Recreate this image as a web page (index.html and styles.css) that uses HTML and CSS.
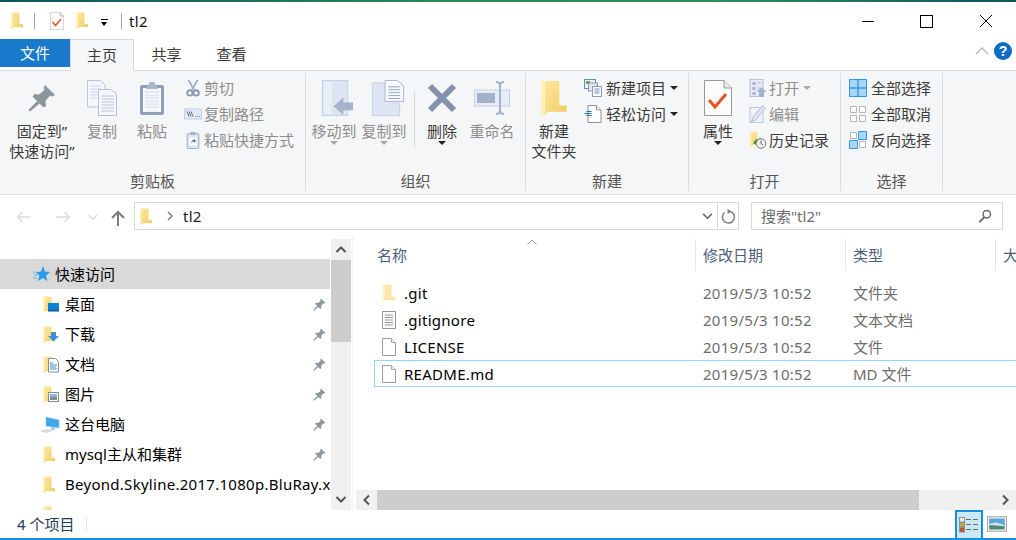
FILE: index.html
```html
<!DOCTYPE html>
<html lang="zh-CN">
<head>
<meta charset="utf-8">
<title>tl2</title>
<link rel="stylesheet" href="styles.css">
</head>
<body>
<svg class="defs" aria-hidden="true">
  <defs>
    <linearGradient id="fg" x1="0" y1="0" x2="1" y2="1"><stop offset="0" stop-color="#fdeaa4"/><stop offset="1" stop-color="#f4ca62"/></linearGradient>
    <symbol id="folder" viewBox="0 0 12 17"><path d="M0 0.500H8.500V12H12V15H3.200L1 17L0 16Z" fill="url(#fg)"/><path d="M0 0.500H1.800V15.500L1 17L0 16Z" fill="#fff0bd"/></symbol>
    <symbol id="folderpale" viewBox="0 0 12 17"><path d="M0 0.500H8.500V12H12V15H3.200L1 17L0 16Z" fill="#fbe7ae"/><path d="M0 0.500H1.800V15.500L1 17L0 16Z" fill="#fdf3d2"/></symbol>
    <symbol id="pin" viewBox="0 0 28 28"><path d="M17 1L27 11L24 12.500L22 11.500L17.500 17L18 22L15.500 23.500L4.500 12.500L6.500 10L11 10.500L16.500 6L15.500 4Z" fill="#8d969d"/><path d="M9 17L11.500 19.500L2 27.500L0.500 26Z" fill="#8d969d"/></symbol>
    <symbol id="doccheck" viewBox="0 0 28 36"><path d="M.5.500H20L27.500 8V35.500H.5Z" fill="#fbfbfb" stroke="#9a9a9a"/><path d="M20 .5V8H27.500" fill="#e8e8e8" stroke="#9a9a9a"/><path d="M5 20L11 27L22 14" fill="none" stroke="#e8531f" stroke-width="3"/></symbol>
    <symbol id="paper" viewBox="0 0 14 18"><path d="M.5.500H9.500L13.500 4.500V17.500H.5Z" fill="#fff" stroke="#9b9b9b"/><path d="M9.500.5V4.500H13.500" fill="#eee" stroke="#aaa"/></symbol>
    <symbol id="textdoc" viewBox="0 0 14 18"><path d="M.5.500H13.500V17.500H.5Z" fill="#fff" stroke="#949494"/><path d="M3 4H11M3 6.500H11M3 9H11M3 11.500H11M3 14H11" stroke="#8d8d8d"/></symbol>
    <symbol id="copybig" viewBox="0 0 30 36"><path d="M.5.500H13L18 5V27H.5Z" fill="#f4f7fc" stroke="#b8c5de"/><path d="M3.500 6H14M3.500 9H14M3.500 12H14M3.500 15H14M3.500 18H10" stroke="#ccd5e8"/><path d="M11.500 9.500H24L29.500 14V35.500H11.500Z" fill="#f4f7fc" stroke="#b0bed9"/><path d="M14.500 16H27M14.500 19H27M14.500 22H27M14.500 25H27M14.500 28H27M14.500 31H27" stroke="#b8c4dc"/></symbol>
    <symbol id="paste" viewBox="0 0 26 36"><rect x="1" y="5" width="24" height="30" rx="2" fill="#8e9ebc"/><rect x="4" y="8" width="18" height="24" fill="#f5f7fb"/><path d="M6 12H20M6 15H20M6 18H20M6 21H20M6 24H20M6 27H20" stroke="#d3dae8"/><path d="M9 5L11 2H15L17 5L19 9H7Z" fill="#aab6cc"/></symbol>
    <symbol id="scissors" viewBox="0 0 16 20"><path d="M3 1L9 12M13 1L7 12" stroke="#a6b0c6" stroke-width="2.200" fill="none"/><circle cx="4.500" cy="15.500" r="3" fill="none" stroke="#8c99b4" stroke-width="2"/><circle cx="11.500" cy="15.500" r="3" fill="none" stroke="#8c99b4" stroke-width="2"/></symbol>
    <symbol id="path" viewBox="0 0 18 11"><rect x=".5" y=".5" width="17" height="10" fill="#e3e9f5" stroke="#c4cfe3"/><path d="M3 3L5 8M5 3L7 8M7 3L9 8" stroke="#5e6f90"/><path d="M11 8H12M13 8H14M15 8H16" stroke="#7a89a6"/></symbol>
    <symbol id="shortcut" viewBox="0 0 14 20"><rect x=".5" y="3" width="13" height="16.500" rx="1" fill="#dfe5f0" stroke="#94a3bf"/><rect x="4" y="1" width="6" height="3.500" fill="#a9b5cb"/><rect x="3" y="7" width="8" height="9" fill="#fff"/><path d="M5 14C5 11 6 10 8 10V8.500L10.500 11L8 13V11.500C7 11.500 6 12.500 5 14Z" fill="#4a6a9c"/></symbol>
    <symbol id="move" viewBox="0 0 33 37"><rect x=".5" y=".5" width="26" height="36" fill="#dde5f3" stroke="#c5d1e6"/><path d="M2 2L10 2V35H2Z" fill="#e9eef7"/><path d="M12 27L22 18V23H32V31H22V36Z" fill="#a5b3cb"/></symbol>
    <symbol id="copyto" viewBox="0 0 33 37"><rect x=".5" y="3" width="28" height="33.500" fill="#dde5f3" stroke="#c5d1e6"/><path d="M13.500.5H26L32.500 6V22H13.500Z" fill="#f7f9fd" stroke="#a9b7d0"/><path d="M17 7H29M17 10H29M17 13H29M17 16H29M17 19H29" stroke="#93a3c0"/></symbol>
    <symbol id="del" viewBox="0 0 32 32"><path d="M4 4L28 28M28 4L4 28" stroke="#8592ad" stroke-width="6"/></symbol>
    <symbol id="rename" viewBox="0 0 36 36"><rect x=".5" y="10" width="35" height="16" fill="#e7edf7" stroke="#c5d1e6"/><rect x="3" y="13" width="18" height="10" fill="#a4b1ca"/><path d="M22 2C25 2 26 3 26 6V30C26 33 25 34 22 34M30 2C27 2 26 3 26 6M30 34C27 34 26 33 26 30" fill="none" stroke="#a5b3cb" stroke-width="2"/></symbol>
    <symbol id="newitem" viewBox="0 0 18 18"><rect x=".5" y=".5" width="11" height="9" fill="#e9f2fb" stroke="#5f8fb0"/><rect x="2" y="2" width="4" height="3" fill="#6ea54f"/><rect x="4.500" y="4" width="9" height="8" fill="#e4e8ee" stroke="#8a96a8"/><path d="M8.500 7.500H17.500V17.500H8.500Z" fill="#fff" stroke="#8a9ab4"/><path d="M10.500 10H15.500M10.500 12H15.500M10.500 14H15.500" stroke="#6d96c8"/></symbol>
    <symbol id="easy" viewBox="0 0 17 18"><path d="M3.500.5H12L16.500 5V17.500H3.500Z" fill="#fff" stroke="#8f8f8f"/><path d="M12 .5V5H16.500" fill="#eee" stroke="#999"/><path d="M2 6.500H7M0 8.500H7M2 10.500H7" stroke="#1c6db8"/></symbol>
    <symbol id="open" viewBox="0 0 17 18"><rect x=".5" y=".5" width="13" height="17" fill="#e5eaf4" stroke="#b7c3da"/><path d="M3 3H6V6H3ZM3 8H6V11H3ZM3 13H6V16H3Z" fill="#a3b0c9"/><path d="M8 4H11M8 9H10" stroke="#a3b0c9"/><path d="M12 8L17 13H14.500V18H9.500V13H7Z" fill="#a3b4d0"/></symbol>
    <symbol id="edit" viewBox="0 0 17 18"><rect x=".5" y="2.500" width="13" height="15" fill="#eef1f8" stroke="#bac6dc"/><path d="M13 .5L16 3L6 15L2 16.500L3 13Z" fill="#dfe5f1" stroke="#b1bdd4"/></symbol>
    <symbol id="history" viewBox="0 0 17 18"><use href="#folder" width="11" height="16"/><path d="M4 13A5 5 0 0 1 10 8V6L13 9.500L10 12.500V10.500A3 3 0 0 0 7 13Z" fill="#3e9a2e"/><circle cx="11.500" cy="12.500" r="4.800" fill="#eee" stroke="#7b7b7b"/><path d="M11.500 9.500V12.500L13.500 14" stroke="#666" fill="none"/></symbol>
    <symbol id="selall" viewBox="0 0 18 18"><path d="M.5.5H17.500V17.500H.5Z" fill="#a9d6f8" stroke="#2e9be6"/><path d="M9 0V18M0 9H18" stroke="#2e9be6" stroke-width="1.500"/></symbol>
    <symbol id="selnone" viewBox="0 0 18 18"><path d="M1.500 1.500H7.500V7.500H1.500ZM10.500 1.500H16.500V7.500H10.500ZM1.500 10.500H7.500V16.500H1.500ZM10.500 10.500H16.500V16.500H10.500Z" fill="#fff" stroke="#b5b5b5"/></symbol>
    <symbol id="selinv" viewBox="0 0 18 18"><path d="M1.500 1.500H7.500V7.500H1.500ZM10.500 10.500H16.500V16.500H10.500Z" fill="#fff" stroke="#b5b5b5"/><path d="M9.500.5H17.500V8.500H9.500ZM.5 9.500H8.500V17.500H.5Z" fill="#a9d6f8" stroke="#2e9be6"/></symbol>
    <symbol id="star" viewBox="0 0 17 16"><path d="M10 0L12 5.500L17 6L13 9.500L14.500 15L10 12L5 15L6.500 9.500L3 6.500L8 5.500Z" fill="#2b9be8"/><path d="M0 6H4M1 9H6M0 12H5" stroke="#62b6ee"/></symbol>
    <symbol id="desk" viewBox="0 0 17 17"><use href="#folder" width="12" height="17"/><rect x="5" y="7" width="11" height="8" fill="#0f7fd6"/><rect x="5" y="14" width="11" height="1.500" fill="#075c9e"/></symbol>
    <symbol id="down" viewBox="0 0 17 17"><use href="#folder" width="12" height="17"/><path d="M8 6H13V10H16L10.500 15.500L5 10H8Z" fill="#3f8fd8"/></symbol>
    <symbol id="docs" viewBox="0 0 17 17"><use href="#folder" width="12" height="17"/><path d="M5.500 2.500H12.500L15.500 5.500V16H5.500Z" fill="#fff" stroke="#8c8c8c"/><path d="M7 7H10M7 9H14M7 11H13M7 13H14" stroke="#2e8fd0"/></symbol>
    <symbol id="pics" viewBox="0 0 17 17"><use href="#folder" width="12" height="17"/><rect x="5.500" y="6.500" width="10" height="9" fill="#fff" stroke="#8a8a8a"/><rect x="7" y="8" width="7" height="3" fill="#88b4d8"/><rect x="7" y="11" width="7" height="3" fill="#7d8f9e"/></symbol>
    <symbol id="pc" viewBox="0 0 20 17"><path d="M6 1L19 4V12L6 10Z" fill="#3fa7ea" stroke="#8cc6ee" stroke-width=".6"/><path d="M11 11L15 12V14H11Z" fill="#b9c1c8"/><path d="M0 15L8 13L13 15L6 17Z" fill="#d5d9dd"/></symbol>
    <symbol id="viewdetail" viewBox="0 0 20 16"><rect x=".5" y=".5" width="5" height="4.500" fill="#eee" stroke="#8d8d8d"/><rect x=".5" y="5.500" width="5" height="4.500" fill="#c9a83c" stroke="#8d8d8d"/><rect x=".5" y="10.500" width="5" height="4.500" fill="#c4552d" stroke="#8d8d8d"/><path d="M7 2.500H12M14 2.500H19M7 7.500H12M14 7.500H19M7 12.500H12M14 12.500H19" stroke="#6a6a6a"/></symbol>
    <symbol id="viewthumb" viewBox="0 0 18 14"><rect x=".5" y=".5" width="17" height="13" fill="#fff" stroke="#a4a4a4" stroke-width="1"/><rect x="2" y="2" width="14" height="5" fill="#5aa6df"/><rect x="2" y="7" width="14" height="5" fill="#4c8a7c"/><path d="M2 7L8 5.500L16 8V9L2 8Z" fill="#cfe3ec"/></symbol>
    <symbol id="chev-d" viewBox="0 0 12 8"><path d="M1 1L6 6L11 1" fill="none" stroke="currentColor" stroke-width="1.800"/></symbol>
  </defs>
</svg>

<div class="window">
  <div class="accent"></div>

  <header class="titlebar">
    <svg class="qa qa-folder"><use href="#folder"/></svg>
    <span class="vsep vsep-a"></span>
    <svg class="qa qa-doc"><use href="#doccheck"/></svg>
    <svg class="qa qa-folder qa-folder2"><use href="#folder"/></svg>
    <span class="qa-drop"></span>
    <span class="vsep vsep-b"></span>
    <span class="wintitle">tl2</span>
    <div class="winbtns">
      <svg class="wb" viewBox="0 0 14 14"><path d="M1 7.500H13" stroke="#000"/></svg>
      <svg class="wb" viewBox="0 0 14 14"><rect x=".5" y="1.500" width="12" height="12" fill="none" stroke="#000"/></svg>
      <svg class="wb" viewBox="0 0 14 14"><path d="M1 1L13 13M13 1L1 13" stroke="#000"/></svg>
    </div>
  </header>

  <nav class="tabs">
    <span class="tab tab-file">文件</span>
    <span class="tab tab-on">主页</span>
    <span class="tab">共享</span>
    <span class="tab">查看</span>
    <div class="tabs-end">
      <svg class="collapse" viewBox="0 0 14 8"><path d="M1 7L7 1L13 7" fill="none" stroke="#b5b5b5" stroke-width="1.300"/></svg>
      <span class="help">?</span>
    </div>
  </nav>

  <section class="ribbon">
    <div class="group g-clip">
      <div class="tools">
        <div class="big w70"><svg class="ic-big ic-pin"><use href="#pin"/></svg><span>固定到”<br>快速访问”</span></div>
        <div class="big w50 off"><svg class="ic-big"><use href="#copybig"/></svg><span>复制</span></div>
        <div class="big w50 off"><svg class="ic-big"><use href="#paste"/></svg><span>粘贴</span></div>
        <div class="smalls off s-clip">
          <div class="small"><svg class="ic-s"><use href="#scissors"/></svg>剪切</div>
          <div class="small"><svg class="ic-s"><use href="#path"/></svg>复制路径</div>
          <div class="small"><svg class="ic-s"><use href="#shortcut"/></svg>粘贴快捷方式</div>
        </div>
      </div>
      <div class="glabel">剪贴板</div>
    </div>

    <div class="group g-org">
      <div class="tools">
        <div class="big w50 off"><svg class="ic-big ic-shift"><use href="#move"/></svg><span>移动到</span><i class="caret caret-off"></i></div>
        <div class="big w50 off"><svg class="ic-big ic-shift"><use href="#copyto"/></svg><span>复制到</span><i class="caret caret-off"></i></div>
        <span class="tooldiv"></span>
        <div class="big w50"><svg class="ic-big ic-del"><use href="#del"/></svg><span>删除</span><i class="caret"></i></div>
        <div class="big w50 off"><svg class="ic-big"><use href="#rename"/></svg><span>重命名</span></div>
      </div>
      <div class="glabel">组织</div>
    </div>

    <div class="group g-new">
      <div class="tools">
        <div class="big w44"><svg class="ic-big"><use href="#folder"/></svg><span>新建<br>文件夹</span></div>
        <div class="smalls s-new">
          <div class="small"><svg class="ic-s"><use href="#newitem"/></svg>新建项目<i class="caret caret-in"></i></div>
          <div class="small"><svg class="ic-s"><use href="#easy"/></svg>轻松访问<i class="caret caret-in"></i></div>
        </div>
      </div>
      <div class="glabel">新建</div>
    </div>

    <div class="group g-open">
      <div class="tools">
        <div class="big w44"><svg class="ic-big"><use href="#doccheck"/></svg><span>属性</span><i class="caret"></i></div>
        <div class="smalls s-open">
          <div class="small off"><svg class="ic-s"><use href="#open"/></svg>打开<i class="caret caret-in caret-off"></i></div>
          <div class="small off"><svg class="ic-s"><use href="#edit"/></svg>编辑</div>
          <div class="small"><svg class="ic-s"><use href="#history"/></svg>历史记录</div>
        </div>
      </div>
      <div class="glabel">打开</div>
    </div>

    <div class="group g-sel">
      <div class="tools">
        <div class="smalls s-sel">
          <div class="small"><svg class="ic-s"><use href="#selall"/></svg>全部选择</div>
          <div class="small"><svg class="ic-s"><use href="#selnone"/></svg>全部取消</div>
          <div class="small"><svg class="ic-s"><use href="#selinv"/></svg>反向选择</div>
        </div>
      </div>
      <div class="glabel">选择</div>
    </div>
  </section>

  <section class="addressrow">
    <svg class="navbtn nb-back" viewBox="0 0 16 12"><path d="M15 6H1.500M6.500 1L1.500 6L6.500 11" fill="none" stroke="#dcdcdc" stroke-width="1.500"/></svg>
    <svg class="navbtn nb-fwd" viewBox="0 0 16 12"><path d="M1 6H14.500M9.500 1L14.500 6L9.500 11" fill="none" stroke="#dcdcdc" stroke-width="1.500"/></svg>
    <svg class="nb-drop"><use href="#chev-d"/></svg>
    <svg class="nb-up" viewBox="0 0 14 16"><path d="M7 16V2M1 8L7 2L13 8" fill="none" stroke="#7c7c7c" stroke-width="2"/></svg>
    <div class="addr">
      <svg class="addr-folder"><use href="#folder"/></svg>
      <svg class="addr-sep" viewBox="0 0 6 10"><path d="M1 1L5 5L1 9" fill="none" stroke="#7d7d7d" stroke-width="1.500"/></svg>
      <span class="addr-text latin">tl2</span>
      <svg class="addr-drop"><use href="#chev-d"/></svg>
      <span class="addr-refresh"><svg viewBox="0 0 14 15"><path d="M9 2.300A6 6 0 1 1 3.500 3.500" fill="none" stroke="#7d7d7d" stroke-width="1.500"/><path d="M6.500 0L10.500 2.500L6.500 5Z" fill="#7d7d7d"/></svg></span>
    </div>
    <div class="search">
      <span>搜索"tl2"</span>
      <svg viewBox="0 0 16 16"><circle cx="10" cy="6" r="4.300" fill="none" stroke="#666" stroke-width="1.600"/><path d="M7 9.500L1.500 15" stroke="#666" stroke-width="2.200"/></svg>
    </div>
  </section>

  <main class="main">
    <aside class="navpane">
      <div class="navlist">
        <div class="navrow root"><svg class="nic"><use href="#star"/></svg><span>快速访问</span></div>
        <div class="navrow"><svg class="nic"><use href="#desk"/></svg><span>桌面</span><svg class="npin"><use href="#pin"/></svg></div>
        <div class="navrow"><svg class="nic"><use href="#down"/></svg><span>下载</span><svg class="npin"><use href="#pin"/></svg></div>
        <div class="navrow"><svg class="nic"><use href="#docs"/></svg><span>文档</span><svg class="npin"><use href="#pin"/></svg></div>
        <div class="navrow"><svg class="nic"><use href="#pics"/></svg><span>图片</span><svg class="npin"><use href="#pin"/></svg></div>
        <div class="navrow"><svg class="nic nic-pc"><use href="#pc"/></svg><span>这台电脑</span><svg class="npin"><use href="#pin"/></svg></div>
        <div class="navrow"><svg class="nic nic-f"><use href="#folder"/></svg><span>mysql主从和集群</span><svg class="npin"><use href="#pin"/></svg></div>
        <div class="navrow"><svg class="nic nic-f"><use href="#folder"/></svg><span class="clip latin">Beyond.Skyline.2017.1080p.BluRay.x</span></div>
        <div class="navrow"><svg class="nic nic-f"><use href="#folder"/></svg></div>
      </div>
      <div class="vscroll">
        <svg class="sb-btn" viewBox="0 0 20 21"><path d="M5.500 13L10 8.500L14.500 13" fill="none" stroke="#555" stroke-width="2"/></svg>
        <div class="vthumb"></div>
        <svg class="sb-btn sb-end" viewBox="0 0 20 21"><path d="M5.500 8L10 12.500L14.500 8" fill="none" stroke="#555" stroke-width="2"/></svg>
      </div>
    </aside>

    <div class="content">
      <div class="colhead">
        <div class="hcell h-name">名称<svg class="sort" viewBox="0 0 10 6"><path d="M.5 5.500L5 1L9.500 5.500" fill="none" stroke="#9a9a9a"/></svg></div>
        <div class="hcell">修改日期</div>
        <div class="hcell">类型</div>
        <div class="hcell">大小</div>
      </div>
      <div class="files">
        <div class="frow"><span class="fname latin"><svg class="fic"><use href="#folderpale"/></svg>.git</span><span class="fmeta latin">2019/5/3 10:52</span><span class="fmeta">文件夹</span></div>
        <div class="frow"><span class="fname latin"><svg class="fic"><use href="#textdoc"/></svg>.gitignore</span><span class="fmeta latin">2019/5/3 10:52</span><span class="fmeta">文本文档</span></div>
        <div class="frow"><span class="fname latin"><svg class="fic"><use href="#paper"/></svg>LICENSE</span><span class="fmeta latin">2019/5/3 10:52</span><span class="fmeta">文件</span></div>
        <div class="frow sel"><span class="fname latin"><svg class="fic"><use href="#paper"/></svg>README.md</span><span class="fmeta latin">2019/5/3 10:52</span><span class="fmeta">MD 文件</span></div>
      </div>
      <div class="hscroll">
        <svg class="hs-btn" viewBox="0 0 21 20"><path d="M13 5.500L8.500 10L13 14.500" fill="none" stroke="#555" stroke-width="2"/></svg>
        <div class="hthumb"></div>
        <svg class="hs-btn hs-end" viewBox="0 0 21 20"><path d="M8 5.500L12.500 10L8 14.500" fill="none" stroke="#555" stroke-width="2"/></svg>
      </div>
    </div>
  </main>

  <footer class="status">
    <span class="count">4 个项目</span>
    <span class="status-sep"></span>
    <div class="views">
      <span class="viewbtn on"><svg><use href="#viewdetail"/></svg></span>
      <span class="viewbtn"><svg><use href="#viewthumb"/></svg></span>
    </div>
  </footer>
</div>
</body>
</html>
```
FILE: styles.css
```css
* { box-sizing: border-box; }
html, body { margin: 0; padding: 0; width: 1016px; height: 540px; overflow: hidden; background: #fff; }
body { font: 15px/20px "Noto Sans", "Noto Sans CJK SC", sans-serif; color: #000; }
.defs { width: 0; height: 0; display: block; }
.window { width: 1016px; height: 540px; display: flex; flex-direction: column; overflow: hidden; }
.accent { height: 2px; flex: none; background: linear-gradient(90deg, #10515f 0, #2b8a55 45%, #2f8f5b 70%, #10515f 100%); }
.latin { letter-spacing: .28px; }

/* title bar */
.titlebar { height: 37px; flex: none; display: flex; align-items: center; padding-left: 11px; }
.qa { display: block; }
.qa-folder { width: 12px; height: 17px; }
.vsep { width: 1px; height: 16px; background: #a0a0a0; }
.vsep-a { margin-left: 11px; }
.qa-doc { width: 14px; height: 18px; margin-left: 15px; }
.qa-folder2 { margin-left: 12px; }
.qa-drop { width: 7px; height: 6px; margin-left: 13px; margin-top: 3px; border-top: 1px solid #000; position: relative; }
.qa-drop::after { content: ""; position: absolute; left: 0; top: 2px; border: 3.500px solid transparent; border-top: 4px solid #000; border-bottom: 0; }
.vsep-b { margin-left: 13px; }
.wintitle { margin-left: 7px; font-size: 15px; color: #111; letter-spacing: .4px; }
.winbtns { margin-left: auto; display: flex; gap: 45px; padding-right: 23px; }
.wb { width: 14px; height: 14px; display: block; }

/* tabs */
.tabs { height: 32px; flex: none; display: flex; position: relative; border-bottom: 1px solid #dadbdc; }
.tab { width: 65px; height: 31px; display: flex; align-items: center; justify-content: center; padding-bottom: 2px; color: #3b3b3b; }
.tab-file { width: 70px; height: 28px; padding-bottom: 0; background: #1979ca; color: #fff; }
.tab-on { width: 64px; height: 32px; background: #f5f6f7; border: 1px solid #dadbdc; border-bottom: 0; padding-bottom: 2px; position: relative; z-index: 1; }
.tabs-end { margin-left: auto; display: flex; align-items: center; gap: 5px; padding: 0 4px 7px 0; }
.collapse { width: 14px; height: 8px; }
.help { width: 18px; height: 18px; border-radius: 50%; background: #0c6dc6; color: #fff; font: bold 14px/18px "Liberation Sans", sans-serif; text-align: center; }

/* ribbon */
.ribbon { height: 124px; flex: none; display: flex; background: #f5f6f7; border-bottom: 1px solid #dadbdc; padding: 2px 0 3px; color: #3c3c3c; }
.group { display: flex; flex-direction: column; border-right: 1px solid #dcdddf; flex: none; }
.g-clip { width: 306px; }
.g-clip .tools { padding-left: 7px; }
.g-org { width: 220px; }
.g-org .tools { padding-left: 3px; }
.g-new { width: 163px; }
.g-new .tools { padding-left: 6px; }
.g-open { width: 152px; }
.g-open .tools { padding-left: 7px; }
.g-sel { width: 102px; }
.g-sel .tools { padding-left: 8px; }
.tools { flex: 1; display: flex; min-height: 0; }
.glabel { height: 23px; padding-top: 3px; line-height: 20px; text-align: center; color: #555; flex: none; }
.big { display: flex; flex-direction: column; align-items: center; text-align: center; padding-top: 7px; flex: none; position: relative; }
.big span { display: block; margin-top: 5px; white-space: nowrap; }
.w70 { width: 70px; }
.w50 { width: 50px; }
.w44 { width: 44px; }
.ic-big { width: 36px; height: 36px; display: block; flex: none; }
.ic-pin { width: 28px; height: 28px; margin: 4px 0; }
.ic-del { width: 32px; height: 32px; margin: 2px 0; }
.ic-shift { margin-left: 8px; }
.off { color: #8d8d8d; }
.caret { display: block; width: 0; height: 0; border: 4px solid transparent; border-top: 4px solid #222; border-bottom: 0; margin-top: 0; }
.caret-off { border-top-color: #a9a9a9; }
.caret-in { margin: 0 0 0 4px; }
.tooldiv { width: 1px; height: 55px; background: #d5d6d8; margin: 19px 2px 0 5px; flex: none; }
.smalls { display: flex; flex-direction: column; padding-top: 2px; flex: none; }
.small { height: 26px; display: flex; align-items: center; white-space: nowrap; }
.ic-s { width: 18px; height: 18px; margin-right: 4px; flex: none; }
.s-clip { margin-left: 7px; }
.s-clip .ic-s, .s-open .ic-s { margin-right: 2px; }
.s-new { margin-left: 8px; }
.s-open { margin-left: 9px; }
.s-sel { margin-left: 0; }

/* address */
.addressrow { height: 41px; flex: none; display: flex; align-items: flex-start; padding-top: 7px; }
.navbtn { width: 16px; height: 12px; margin-top: 9px; flex: none; }
.nb-back { margin-left: 16px; }
.nb-fwd { margin-left: 23px; }
.nb-drop { width: 10px; height: 7px; margin: 12px 0 0 17px; color: #dcdcdc; flex: none; }
.nb-up { width: 14px; height: 16px; margin: 8px 0 0 13px; flex: none; }
.addr { width: 605px; height: 28px; margin-left: 9px; border: 1px solid #d9d9d9; display: flex; align-items: center; flex: none; padding-left: 5px; }
.addr-folder { width: 12px; height: 17px; flex: none; }
.addr-sep { width: 6px; height: 10px; margin-left: 15px; flex: none; }
.addr-text { margin-left: 10px; color: #222; }
.addr-drop { width: 11px; height: 7px; margin-left: auto; color: #666; flex: none; }
.addr-refresh { width: 21px; height: 26px; margin-left: 4px; border-left: 1px solid #d9d9d9; display: flex; align-items: center; justify-content: center; flex: none; }
.addr-refresh svg { width: 14px; height: 15px; }
.search { width: 252px; height: 28px; margin-left: 12px; border: 1px solid #d9d9d9; display: flex; align-items: center; justify-content: space-between; padding: 0 10px 0 9px; color: #6d6d6d; flex: none; }
.search svg { width: 14px; height: 14px; }

/* main */
.main { height: 274px; flex: none; display: flex; }
.navpane { width: 353px; flex: none; display: flex; border-right: 1px solid #f2f2f2; overflow: hidden; padding-top: 3px; }
.navlist { width: 331px; flex: none; padding-top: 20px; overflow: hidden; height: 271px; }
.navrow { width: 330px; height: 30px; display: flex; align-items: center; padding-left: 43px; color: #000; white-space: nowrap; }
.navrow.root { padding-left: 33px; background: #d9d9d9; }
.navrow.root .nic { width: 17px; height: 16px; margin-right: 5px; }
.nic { width: 17px; height: 17px; margin-right: 5px; flex: none; }
.nic-f { width: 12px; margin-right: 10px; }
.nic-pc { width: 20px; margin-left: -3px; margin-right: 5px; }
.npin { width: 13px; height: 13px; margin-left: auto; margin-right: 4px; flex: none; }
.clip { overflow: hidden; width: 265px; flex: none; }
.vscroll { width: 20px; flex: none; background: #f0f0f0; display: flex; flex-direction: column; height: 271px; }
.sb-btn { width: 20px; height: 21px; flex: none; display: block; }
.vthumb { height: 82px; background: #cdcdcd; flex: none; }
.sb-end { margin-top: auto; }

.content { flex: 1; min-width: 0; display: flex; flex-direction: column; padding-left: 3px; overflow: hidden; padding-top: 3px; }
.colhead { height: 32px; flex: none; display: grid; grid-template-columns: 340px 150px 150px 60px; width: 700px; }
.hcell { height: 32px; border-right: 1px solid #e5e5e5; padding-left: 7px; color: #4c607a; display: flex; align-items: center; white-space: nowrap; position: relative; }
.h-name { padding-left: 21px; }
.sort { width: 10px; height: 6px; position: absolute; left: 171px; top: 0; }
.files { flex: 1; padding: 8px 0 0 18px; min-height: 0; }
.frow { height: 27px; display: grid; grid-template-columns: 320px 150px 150px; width: 660px; align-items: center; border: 1px solid transparent; border-right: 0; }
.frow.sel { border-color: #99d1ff; }
.fname { display: flex; align-items: center; padding-left: 6px; color: #000; white-space: nowrap; }
.fic { width: 16px; height: 18px; margin-right: 7px; flex: none; }
.fmeta { color: #6d6d6d; padding-left: 8px; white-space: nowrap; }
.hscroll { height: 20px; flex: none; background: #f0f0f0; display: flex; }
.hs-btn { width: 21px; height: 20px; flex: none; display: block; }
.hthumb { width: 542px; background: #cdcdcd; flex: none; }
.hs-end { margin-left: auto; }

/* status */
.status { flex: 1; display: flex; align-items: center; padding-left: 17px; border-bottom: 2px solid #1a8fd9; color: #1e395b; min-height: 0; }
.count { white-space: nowrap; }
.status-sep { width: 1px; height: 14px; background: #e8e8e8; margin-left: 12px; }
.views { margin-left: auto; display: flex; align-self: stretch; padding-right: 5px; }
.viewbtn { width: 28px; display: flex; align-items: center; justify-content: center; }
.viewbtn.on { background: #cbe8f6; border: 2px solid #1a8fd9; border-bottom: 0; }
.viewbtn svg { width: 20px; height: 16px; display: block; }
```
